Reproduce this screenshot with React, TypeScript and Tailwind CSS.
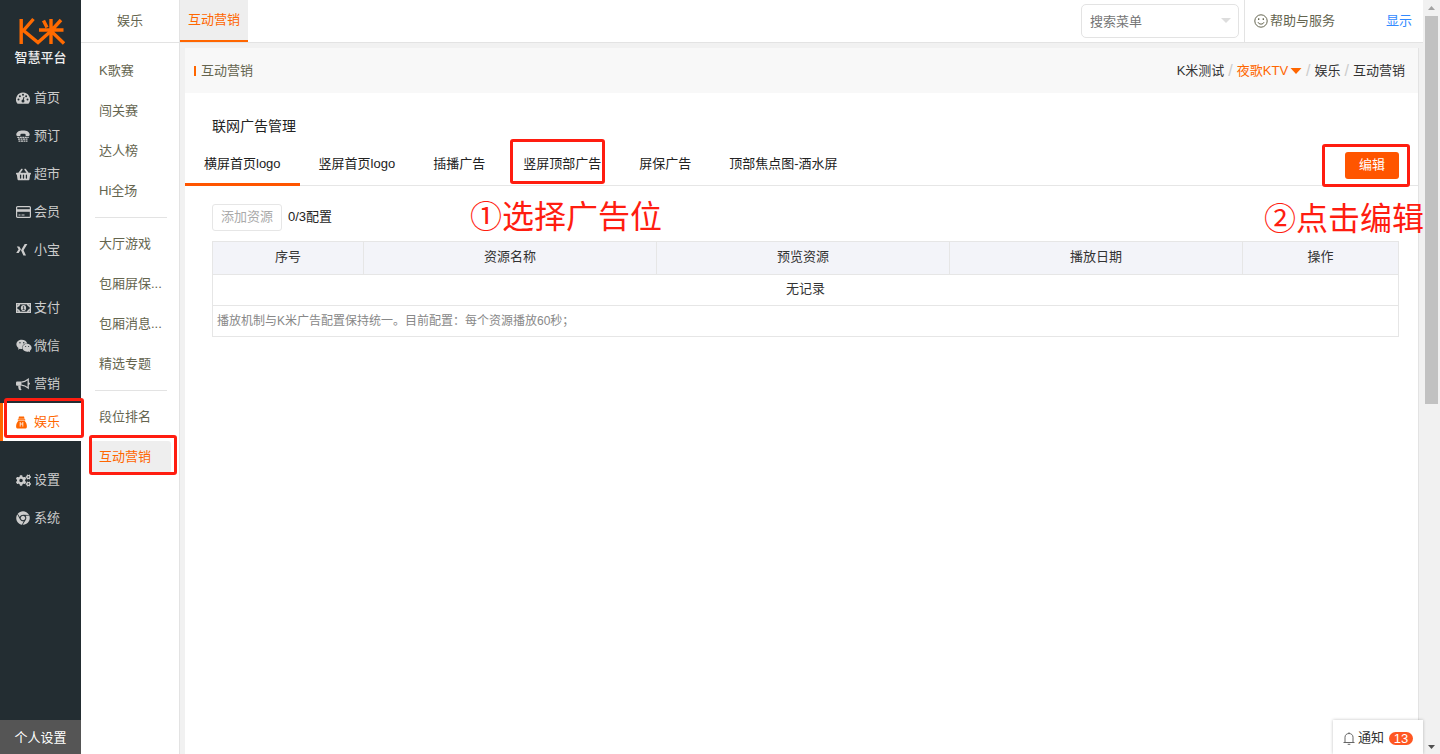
import { useState } from 'react';
import type { ReactNode } from 'react';
import clsx from 'clsx';
import { FaShoppingBasket, FaWeixin, FaCogs, FaChrome } from 'react-icons/fa';

type MenuItem = { label: string; icon: ReactNode };

function GaugeIcon() {
  return (
    <svg viewBox="0 0 14 12" className="h-3 w-[14px]">
      <path fill="currentColor" d="M7 0.500A7 7 0 0 0 1.100 11.300c.2.300.4.400.7.400h10.400c.3 0 .5-.1.700-.4A7 7 0 0 0 7 .500z" />
      <g fill="#232d32">
        <circle cx="2.500" cy="7.500" r="1" />
        <circle cx="3.900" cy="4.200" r="1" />
        <circle cx="7" cy="2.700" r="1" />
        <circle cx="10.100" cy="4.200" r="1" />
        <circle cx="11.500" cy="7.500" r="1" />
        <circle cx="7" cy="9" r="1.500" />
      </g>
      <path d="M7 9L8 5" stroke="#232d32" strokeWidth="1" />
    </svg>
  );
}

function PhoneIcon() {
  return (
    <svg viewBox="0 0 14 12" className="h-3 w-[14px]" fill="currentColor">
      <path d="M0.300 4.800C.300 2 3 .500 7 .500s6.700 1.500 6.700 4.300c0 .8-.3 1.100-1 1.100H10.500c-.7 0-1-.4-1-1V4C8 3.500 6 3.500 4.500 4v.9c0 .6-.3 1-1 1H1.300c-.7 0-1-.3-1-1.100z" />
      <path d="M1.300 7.300H12.700M2 9.200H12M2.500 11.100H11.500" stroke="currentColor" strokeWidth="1.300" strokeDasharray="2 0.500" />
    </svg>
  );
}

function CardIcon() {
  return (
    <svg viewBox="0 0 15 12" className="h-3 w-[15px]" fill="none" stroke="currentColor">
      <rect x="0.6" y="0.6" width="13.8" height="10.8" rx="1" strokeWidth="1.2" />
      <path d="M1 4.5H14" strokeWidth="2.6" />
      <path d="M2.5 9H4.5M5.5 9H8.5" />
    </svg>
  );
}

function XIcon() {
  return (
    <svg viewBox="0 0 12 12" className="h-3 w-3" fill="currentColor">
      <path d="M0.800 2.500H3.300L5 5.300L2.700 9H.200L2.600 5.300z" />
      <path d="M8.700 0H11.400L7.600 6.200L10 11.500H7.400L5 6.200z" />
    </svg>
  );
}

function MoneyIcon() {
  return (
    <svg viewBox="0 0 15 10" className="h-[10px] w-[15px]" fill="none" stroke="currentColor">
      <rect x="0.7" y="0.7" width="13.6" height="8.6" strokeWidth="1.4" />
      <path d="M1 3.2A2.2 2.2 0 0 0 3.2 1M11.8 1A2.2 2.2 0 0 0 14 3.2M14 6.8A2.2 2.2 0 0 0 11.8 9M3.2 9A2.2 2.2 0 0 0 1 6.8" strokeWidth="1.6" />
      <ellipse cx="7.5" cy="5" rx="2.6" ry="3.1" fill="currentColor" stroke="none" />
      <path d="M6.8 3.9L7.6 3.4V6.5M6.5 6.6H8.6" stroke="#232d32" strokeWidth="0.8" />
    </svg>
  );
}

function HornIcon() {
  return (
    <svg viewBox="0 0 14 13" className="h-[13px] w-[14px]" fill="currentColor">
      <path d="M1.300 3.600H5.500V7.800H1.300C.600 7.800 0 7.300 0 6.500V4.900C0 4.100.600 3.600 1.300 3.600z" />
      <path d="M2.300 7.500H4.600C4.500 8.800 4.900 9.400 4.700 9.900C4.600 10.500 5 10.900 5.700 11.500C5.100 12.400 3.500 12.300 2.900 11.600C2.600 10.400 2 9.200 2.300 7.500z" />
      <path d="M5.500 4.200C8 4 10.200 2.900 12.200 1.300V10.100C10.200 8.500 8 7.400 5.500 7.200" fill="none" stroke="currentColor" strokeWidth="1.300" />
      <path d="M12 4.500C13.300 4.500 14 5 14 5.700S13.300 6.900 12 6.900z" />
    </svg>
  );
}

function BagIcon() {
  return (
    <svg viewBox="0 0 11 13" className="h-[13px] w-[11px]" fill="currentColor">
      <path d="M3 0.500h5l.6 2.300H2.400z" />
      <path d="M1.800 3.200h7.400v1.300H1.800z" />
      <path d="M2.200 5h6.600c1.400 1.700 2.100 3.500 2.100 5.400 0 1.600-.8 2.200-2.200 2.200H2.300C.900 12.600.100 12 .100 10.400c0-1.900.7-3.700 2.100-5.400z" />
      <path d="M4.200 6v4.600M6.800 6v4.600M4.200 8h2.600" stroke="#fff" strokeWidth="0.8" fill="none" />
    </svg>
  );
}

const MENU: MenuItem[][] = [
  [
    { label: '首页', icon: <GaugeIcon /> },
    { label: '预订', icon: <PhoneIcon /> },
    { label: '超市', icon: <FaShoppingBasket size={15} /> },
    { label: '会员', icon: <CardIcon /> },
    { label: '小宝', icon: <XIcon /> },
  ],
  [
    { label: '支付', icon: <MoneyIcon /> },
    { label: '微信', icon: <FaWeixin size={16} /> },
    { label: '营销', icon: <HornIcon /> },
    { label: '娱乐', icon: <BagIcon /> },
  ],
  [
    { label: '设置', icon: <FaCogs size={15} /> },
    { label: '系统', icon: <FaChrome size={14} /> },
  ],
];

const SUB_MENU = [
  ['K歌赛', '闯关赛', '达人榜', 'Hi全场'],
  ['大厅游戏', '包厢屏保...', '包厢消息...', '精选专题'],
  ['段位排名', '互动营销'],
];

const TABS = ['横屏首页logo', '竖屏首页logo', '插播广告', '竖屏顶部广告', '屏保广告', '顶部焦点图-酒水屏'];

const COLUMNS = ['序号', '资源名称', '预览资源', '播放日期', '操作'];

// red frame drawn over the step the reader should click
function Mark({ className }: { className: string }) {
  return <span className={clsx('pointer-events-none absolute z-10 rounded-[3px] border-3 border-[#ff1d10]', className)} />;
}

function Logo() {
  return (
    <div className="flex flex-col items-center pt-[17px] text-[#eee]">
      <svg viewBox="0 0 48 28" className="h-7 w-12" fill="none" stroke="#ff6a00" strokeWidth="3.400">
        <path d="M4.200 2V27M16.500 2L6.500 13.500L21 25.500L34 14" />
        <path d="M22 13H46.500M34 2V27M26.500 3.500L30 10.500M44 3L34 14L47 26.500" />
      </svg>
      <span className="mt-[5px] text-[13px] font-medium leading-4">智慧平台</span>
    </div>
  );
}

function Sidebar() {
  return (
    <aside className="flex w-[81px] shrink-0 flex-col bg-[#232d32] text-[#ccc]">
      <Logo />
      <nav className="mt-[13px] flex flex-col gap-5">
        {MENU.map((group, i) => (
          <ul key={i}>
            {group.map((item) => {
              const active = item.label === '娱乐';
              return (
                <li key={item.label} className="relative">
                  <a
                    href="#"
                    className={clsx(
                      'flex h-[38px] items-center border-l-3 pl-[13px]',
                      active ? 'border-[#ff6600] bg-white text-[#ff6600]' : 'border-transparent'
                    )}
                  >
                    <span className="w-[18px]">{item.icon}</span>
                    {item.label}
                  </a>
                  {active && <Mark className="-right-[3px] -top-[5px] bottom-[3px] left-1" />}
                </li>
              );
            })}
          </ul>
        ))}
      </nav>
      <button className="mt-auto h-[34px] bg-[#555] pt-[2px] text-white">个人设置</button>
    </aside>
  );
}

function SubMenu() {
  return (
    <nav className="w-[99px] shrink-0 border-r border-[#e3e3e3] bg-white pt-2 text-[#65654f]">
      {SUB_MENU.map((group, i) => (
        <div key={i}>
          {i > 0 && <hr className="my-[6px] ml-[14px] mr-3 border-[#e3e3e3]" />}
          {group.map((label) => {
            const active = label === '互动营销';
            return (
              <div key={label} className="relative py-1 pl-[10px] pr-2">
                <a
                  href="#"
                  className={clsx(
                    'flex h-8 items-center whitespace-nowrap rounded-[3px] pl-2',
                    active && 'bg-[#eee] text-[#ff6600]'
                  )}
                >
                  {label}
                </a>
                {active && <Mark className="-top-[2px] bottom-[2px] left-2 right-[2px]" />}
              </div>
            );
          })}
        </div>
      ))}
    </nav>
  );
}

function TopBar() {
  return (
    <header className="flex h-[43px] shrink-0 border-b border-[#e3e3e3] bg-white text-[#65654f]">
      <div className="flex w-[99px] items-center justify-center border-r border-[#e3e3e3]">娱乐</div>
      <a href="#" className="flex w-[68px] items-center justify-center border-b-2 border-[#ff6600] bg-[#eee] text-[#ff6600]">
        互动营销
      </a>
      <label className="relative ml-auto mr-[5px] mt-1 h-[34px] w-[158px]">
        <input
          type="text"
          aria-label="搜索菜单"
          placeholder="搜索菜单"
          className="h-full w-full rounded-[5px] border border-[#e3e3e3] px-2 placeholder:text-[#757575]"
        />
        <svg viewBox="0 0 10 5" className="absolute right-2 top-[14px] h-[5px] w-[10px]" fill="#ddd">
          <path d="M0 0H10L5 5z" />
        </svg>
      </label>
      <div className="flex w-[179px] items-center justify-between border-l border-[#e3e3e3] pl-[9px] pr-[11px]">
        <a href="#" className="flex items-center gap-[2px]">
          <svg viewBox="0 0 14 14" className="size-[14px]" fill="none" stroke="currentColor">
            <circle cx="7" cy="7" r="6.200" />
            <path d="M4 8.200a3.100 2.600 0 0 0 6 0" />
            <path d="M4.700 4.300v1.600M9.300 4.300v1.600" strokeWidth="1.300" />
          </svg>
          帮助与服务
        </a>
        <a href="#" className="text-[#338aff]">显示</a>
      </div>
    </header>
  );
}

function Slash() {
  return <span className="text-base leading-5 text-[#ccc]">/</span>;
}

function Breadcrumb() {
  return (
    <div className="flex h-[45px] items-center justify-between bg-[#f8f8f8] pl-[9px] pr-[13px]">
      <h1 className="flex items-center gap-[5px] text-[#65654f]">
        <span className="h-[10px] w-[2px] bg-[#ff6600]" />
        互动营销
      </h1>
      <div className="flex items-center gap-1 text-[#333]">
        <a href="#">K米测试</a>
        <Slash />
        <a href="#" className="flex items-center gap-[2px] text-[#ff6600]">
          夜歌KTV
          <svg viewBox="0 0 12 6" className="h-[6px] w-3" fill="currentColor">
            <path d="M0.500 0H11.500L6 6z" />
          </svg>
        </a>
        <Slash />
        <a href="#">娱乐</a>
        <Slash />
        <span>互动营销</span>
      </div>
    </div>
  );
}

function AdManager() {
  const [tab, setTab] = useState(TABS[0]);

  return (
    <section className="relative pt-[22px] text-[#222]">
      <h2 className="pl-[27px] text-sm leading-[22px]">联网广告管理</h2>
      <div className="mt-[5px] flex h-11 items-stretch border-b border-[#e6e6e6]">
        {TABS.map((label) => (
          <button
            key={label}
            onClick={() => setTab(label)}
            className={clsx(
              'relative -mb-px border-b-3 px-[19px] pt-[3px]',
              label === tab ? 'border-[#ff5500]' : 'border-transparent'
            )}
          >
            {label}
            {label === '竖屏顶部广告' && <Mark className="-bottom-[1px] -top-[3px] left-[6px] right-[15px]" />}
          </button>
        ))}
        <div className="relative ml-auto mr-[19px] mt-[10px] h-[27px] w-[54px]">
          <button className="h-full w-full rounded-[3px] bg-[#ff5500] pb-[2px] text-white">编辑</button>
          <Mark className="-bottom-2 -left-[23px] -right-[11px] -top-2" />
        </div>
      </div>
      <span className="absolute left-[285px] top-[101px] text-[32px] leading-[46px] text-[#ff1d10]">①选择广告位</span>
      <span className="absolute -right-[6px] top-[103px] z-10 whitespace-nowrap text-[32px] leading-[46px] text-[#ff1d10]">
        ②点击编辑
      </span>

      <div className="px-[19px] pl-[27px] pt-[18px]">
        <div className="flex items-center gap-[6px]">
          <button disabled className="h-[27px] w-[70px] rounded-[3px] border border-[#e6e6e6] pb-[2px] text-[#aaa]">
            添加资源
          </button>
          <span className="pb-[2px]">0/3配置</span>
        </div>
        <table className="mt-[10px] w-full table-fixed border-collapse text-[#333] [&_td]:border [&_td]:border-[#e6e6e6] [&_th]:border [&_th]:border-[#e6e6e6]">
          <colgroup>
            <col className="w-[151px]" />
            <col />
            <col />
            <col />
            <col className="w-[156px]" />
          </colgroup>
          <thead>
            <tr className="h-[33px] bg-[#f3f4f9]">
              {COLUMNS.map((c) => (
                <th key={c} className="pb-[2px] font-normal">{c}</th>
              ))}
            </tr>
          </thead>
          <tbody>
            <tr className="h-[31px] text-center">
              <td colSpan={5} className="pb-[2px]">无记录</td>
            </tr>
            <tr className="h-[31px] text-xs text-[#888]">
              <td colSpan={5} className="pl-1">播放机制与K米广告配置保持统一。目前配置：每个资源播放60秒；</td>
            </tr>
          </tbody>
        </table>
      </div>
    </section>
  );
}

function Notice() {
  return (
    <button className="absolute bottom-0 right-0 flex h-[34px] w-[90px] items-center bg-white pl-[10px] pt-[2px] text-[#333] shadow-[0_0_3px_rgba(0,0,0,0.25)]">
      <svg viewBox="0 0 12 13" className="mr-[3px] h-[13px] w-3" fill="none" stroke="#666">
        <path d="M0.500 10.500H11.500M2 10.500V5.200C2 3 3.700 1.500 6 1.500S10 3 10 5.200V10.500M6 0.300V1.500M4.700 12.300H7.300" />
      </svg>
      通知
      <span className="ml-[5px] h-[13px] w-6 rounded-full bg-[#ff5722] text-center leading-[13px] text-white">13</span>
    </button>
  );
}

function ScrollBar() {
  return (
    <div className="flex w-[17px] shrink-0 flex-col items-center bg-[#f1f1f1]">
      <svg viewBox="0 0 17 16" className="h-4 w-[17px]" fill="#a3a3a3">
        <path d="M5 10H12L8.500 6z" />
      </svg>
      <div className="h-[388px] w-[13px] bg-[#c1c1c1]" />
      <svg viewBox="0 0 17 16" className="mt-auto h-4 w-[17px]" fill="#505050">
        <path d="M5 7H12L8.500 11z" />
      </svg>
    </div>
  );
}

export default function App() {
  return (
    <div className="flex min-h-screen bg-[#f1f1f1] font-['Liberation_Sans','Noto_Sans_CJK_SC',sans-serif] text-[13px] leading-5">
      <Sidebar />
      <div className="relative flex min-w-0 flex-1 flex-col">
        <TopBar />
        <div className="flex flex-1">
          <SubMenu />
          <main className="ml-[5px] mr-1 mt-[5px] min-w-0 flex-1 border-r border-[#e3e3e3] bg-white">
            <Breadcrumb />
            <AdManager />
          </main>
        </div>
        <Notice />
      </div>
      <ScrollBar />
    </div>
  );
}
